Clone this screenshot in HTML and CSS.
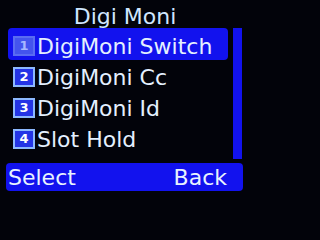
FILE: index.html
```html
<!DOCTYPE html>
<html>
<head>
<meta charset="utf-8">
<link rel="stylesheet" href="styles.css">
</head>
<body>
<div class="screen">
  <div class="title">Digi Moni</div>
  <div class="main">
    <div class="list">
      <div class="row selected"><span class="num">1</span><span class="label">DigiMoni Switch</span></div>
      <div class="row"><span class="num">2</span><span class="label">DigiMoni Cc</span></div>
      <div class="row"><span class="num">3</span><span class="label">DigiMoni Id</span></div>
      <div class="row"><span class="num">4</span><span class="label">Slot Hold</span></div>
    </div>
    <div class="scrollbar"></div>
  </div>
  <div class="softkeys"><span>Select</span><span>Back</span></div>
</div>
</body>
</html>
```
FILE: styles.css
```css
html, body {
  margin: 0;
  padding: 0;
  background: #02030a;
}
.screen {
  width: 250px;
  height: 200px;
  font-family: "DejaVu Sans", sans-serif;
  font-size: 22px;
  color: #e4f0ff;
  overflow: hidden;
}
.title {
  height: 28px;
  box-sizing: border-box;
  padding-top: 4px;
  line-height: 25px;
  text-align: center;
  color: #cfe6ff;
}
.main {
  display: flex;
  height: 135px;
  padding-left: 8px;
  gap: 5px;
}
.list {
  width: 220px;
}
.row {
  display: flex;
  align-items: flex-start;
  height: 31px;
  box-sizing: border-box;
  padding: 6px 0 0 5px;
  gap: 2px;
  border-radius: 4px;
}
.row.selected {
  background: #1212ee;
  height: 32px;
  margin-bottom: -1px;
}
.label {
  line-height: 25px;
  white-space: nowrap;
}
.num {
  width: 22px;
  height: 20px;
  box-sizing: border-box;
  margin-top: 2px;
  border: 2px solid #8cb8ff;
  background: #2434e6;
  color: #ffffff;
  font-size: 13px;
  font-weight: bold;
  line-height: 16px;
  text-align: center;
  flex-shrink: 0;
}
.selected .num {
  border-color: #5a6cf2;
  background: #4454ee;
  color: #a8b8ff;
}
.scrollbar {
  width: 9px;
  height: 131px;
  background: #1212ee;
}
.softkeys {
  display: flex;
  justify-content: space-between;
  margin-left: 6px;
  width: 237px;
  height: 28px;
  box-sizing: border-box;
  padding: 2px 16px 0 2px;
  line-height: 26px;
  background: #1212ee;
  border-radius: 4px;
  color: #e8f2ff;
}
```
